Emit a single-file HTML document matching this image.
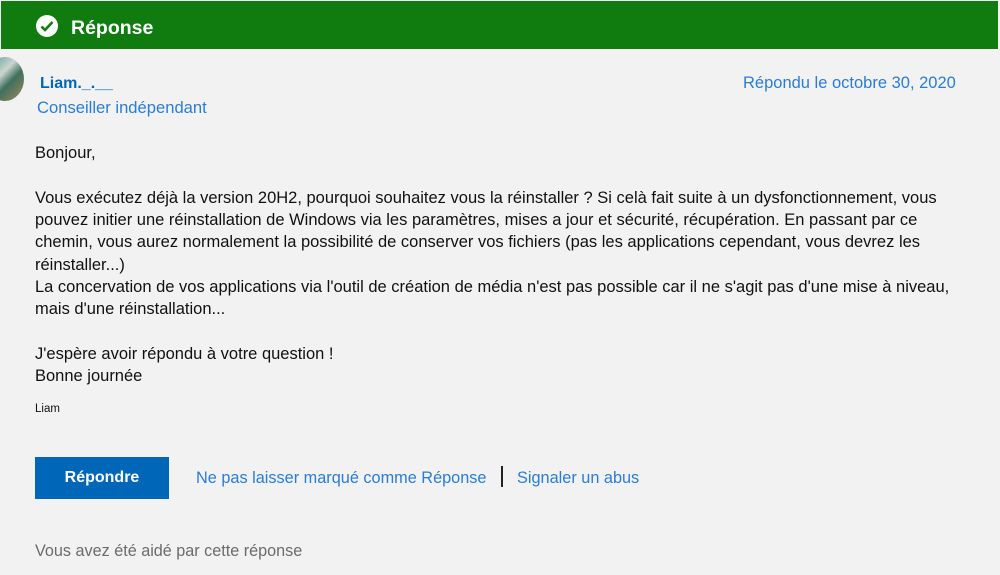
<!DOCTYPE html>
<html><head><meta charset="utf-8"><style>
body{margin:0;width:1000px;height:575px;background:#f2f2f2;font-family:"Liberation Sans",sans-serif;position:relative;overflow:hidden}
.bar{position:absolute;left:1px;top:1px;width:997px;height:48px;background:#107c10;color:#fff}
.bar .t{position:absolute;left:70px;top:16px;font-size:19.5px;font-weight:bold}
.bar svg{position:absolute;left:34px;top:13px}
.av{position:absolute;left:-14px;top:57px;width:38px;height:44px;border-radius:50%;background:linear-gradient(135deg,#5a8f8a,#c9d6d0 40%,#3f6f5c 60%,#a08a60)}
.abs{position:absolute;white-space:nowrap}
.blue{color:#0067b8}
.lb{color:#2b7cd3}
.body{position:absolute;left:35px;top:142px;font-size:16.5px;line-height:22.35px;color:#111;white-space:nowrap}
.btn{position:absolute;left:35px;top:457px;width:134px;height:42px;background:#0067b8;color:#fff;font-weight:bold;font-size:16px;text-align:center;line-height:42px}
</style></head><body>
<div class="bar"><svg width="24" height="24" viewBox="0 0 24 24"><circle cx="12" cy="12" r="11" fill="#fff"/><path d="M6.5 12.5l3.5 3.5 7.5-8" stroke="#107c10" stroke-width="2.6" fill="none"/></svg><span class="t">Réponse</span></div>
<div class="av"></div>
<div class="abs blue" style="left:40px;top:75px;font-size:16px;font-weight:bold">Liam._.__</div>
<div class="abs lb" style="left:37px;top:98px;font-size:16.6px">Conseiller indépendant</div>
<div class="abs lb" style="left:743px;top:74px;font-size:16.5px">Répondu le octobre 30, 2020</div>
<div class="body">Bonjour,<br><br>Vous exécutez déjà la version 20H2, pourquoi souhaitez vous la réinstaller ? Si celà fait suite à un dysfonctionnement, vous<br>pouvez initier une réinstallation de Windows via les paramètres, mises a jour et sécurité, récupération. En passant par ce<br>chemin, vous aurez normalement la possibilité de conserver vos fichiers (pas les applications cependant, vous devrez les<br>réinstaller...)<br>La concervation de vos applications via l'outil de création de média n'est pas possible car il ne s'agit pas d'une mise à niveau,<br>mais d'une réinstallation...<br><br>J'espère avoir répondu à votre question !<br>Bonne journée</div>
<div class="abs" style="left:35px;top:403px;font-size:11.5px;color:#111">Liam</div>
<div class="btn">Répondre</div>
<div class="abs lb" style="left:196px;top:469px;font-size:16.3px">Ne pas laisser marqué comme Réponse</div>
<div class="abs" style="left:501px;top:466px;width:2px;height:21px;background:#222"></div>
<div class="abs lb" style="left:517px;top:469px;font-size:16.3px">Signaler un abus</div>
<div class="abs" style="left:35px;top:542px;font-size:16.2px;color:#6b6b6b">Vous avez été aidé par cette réponse</div>
</body></html>
